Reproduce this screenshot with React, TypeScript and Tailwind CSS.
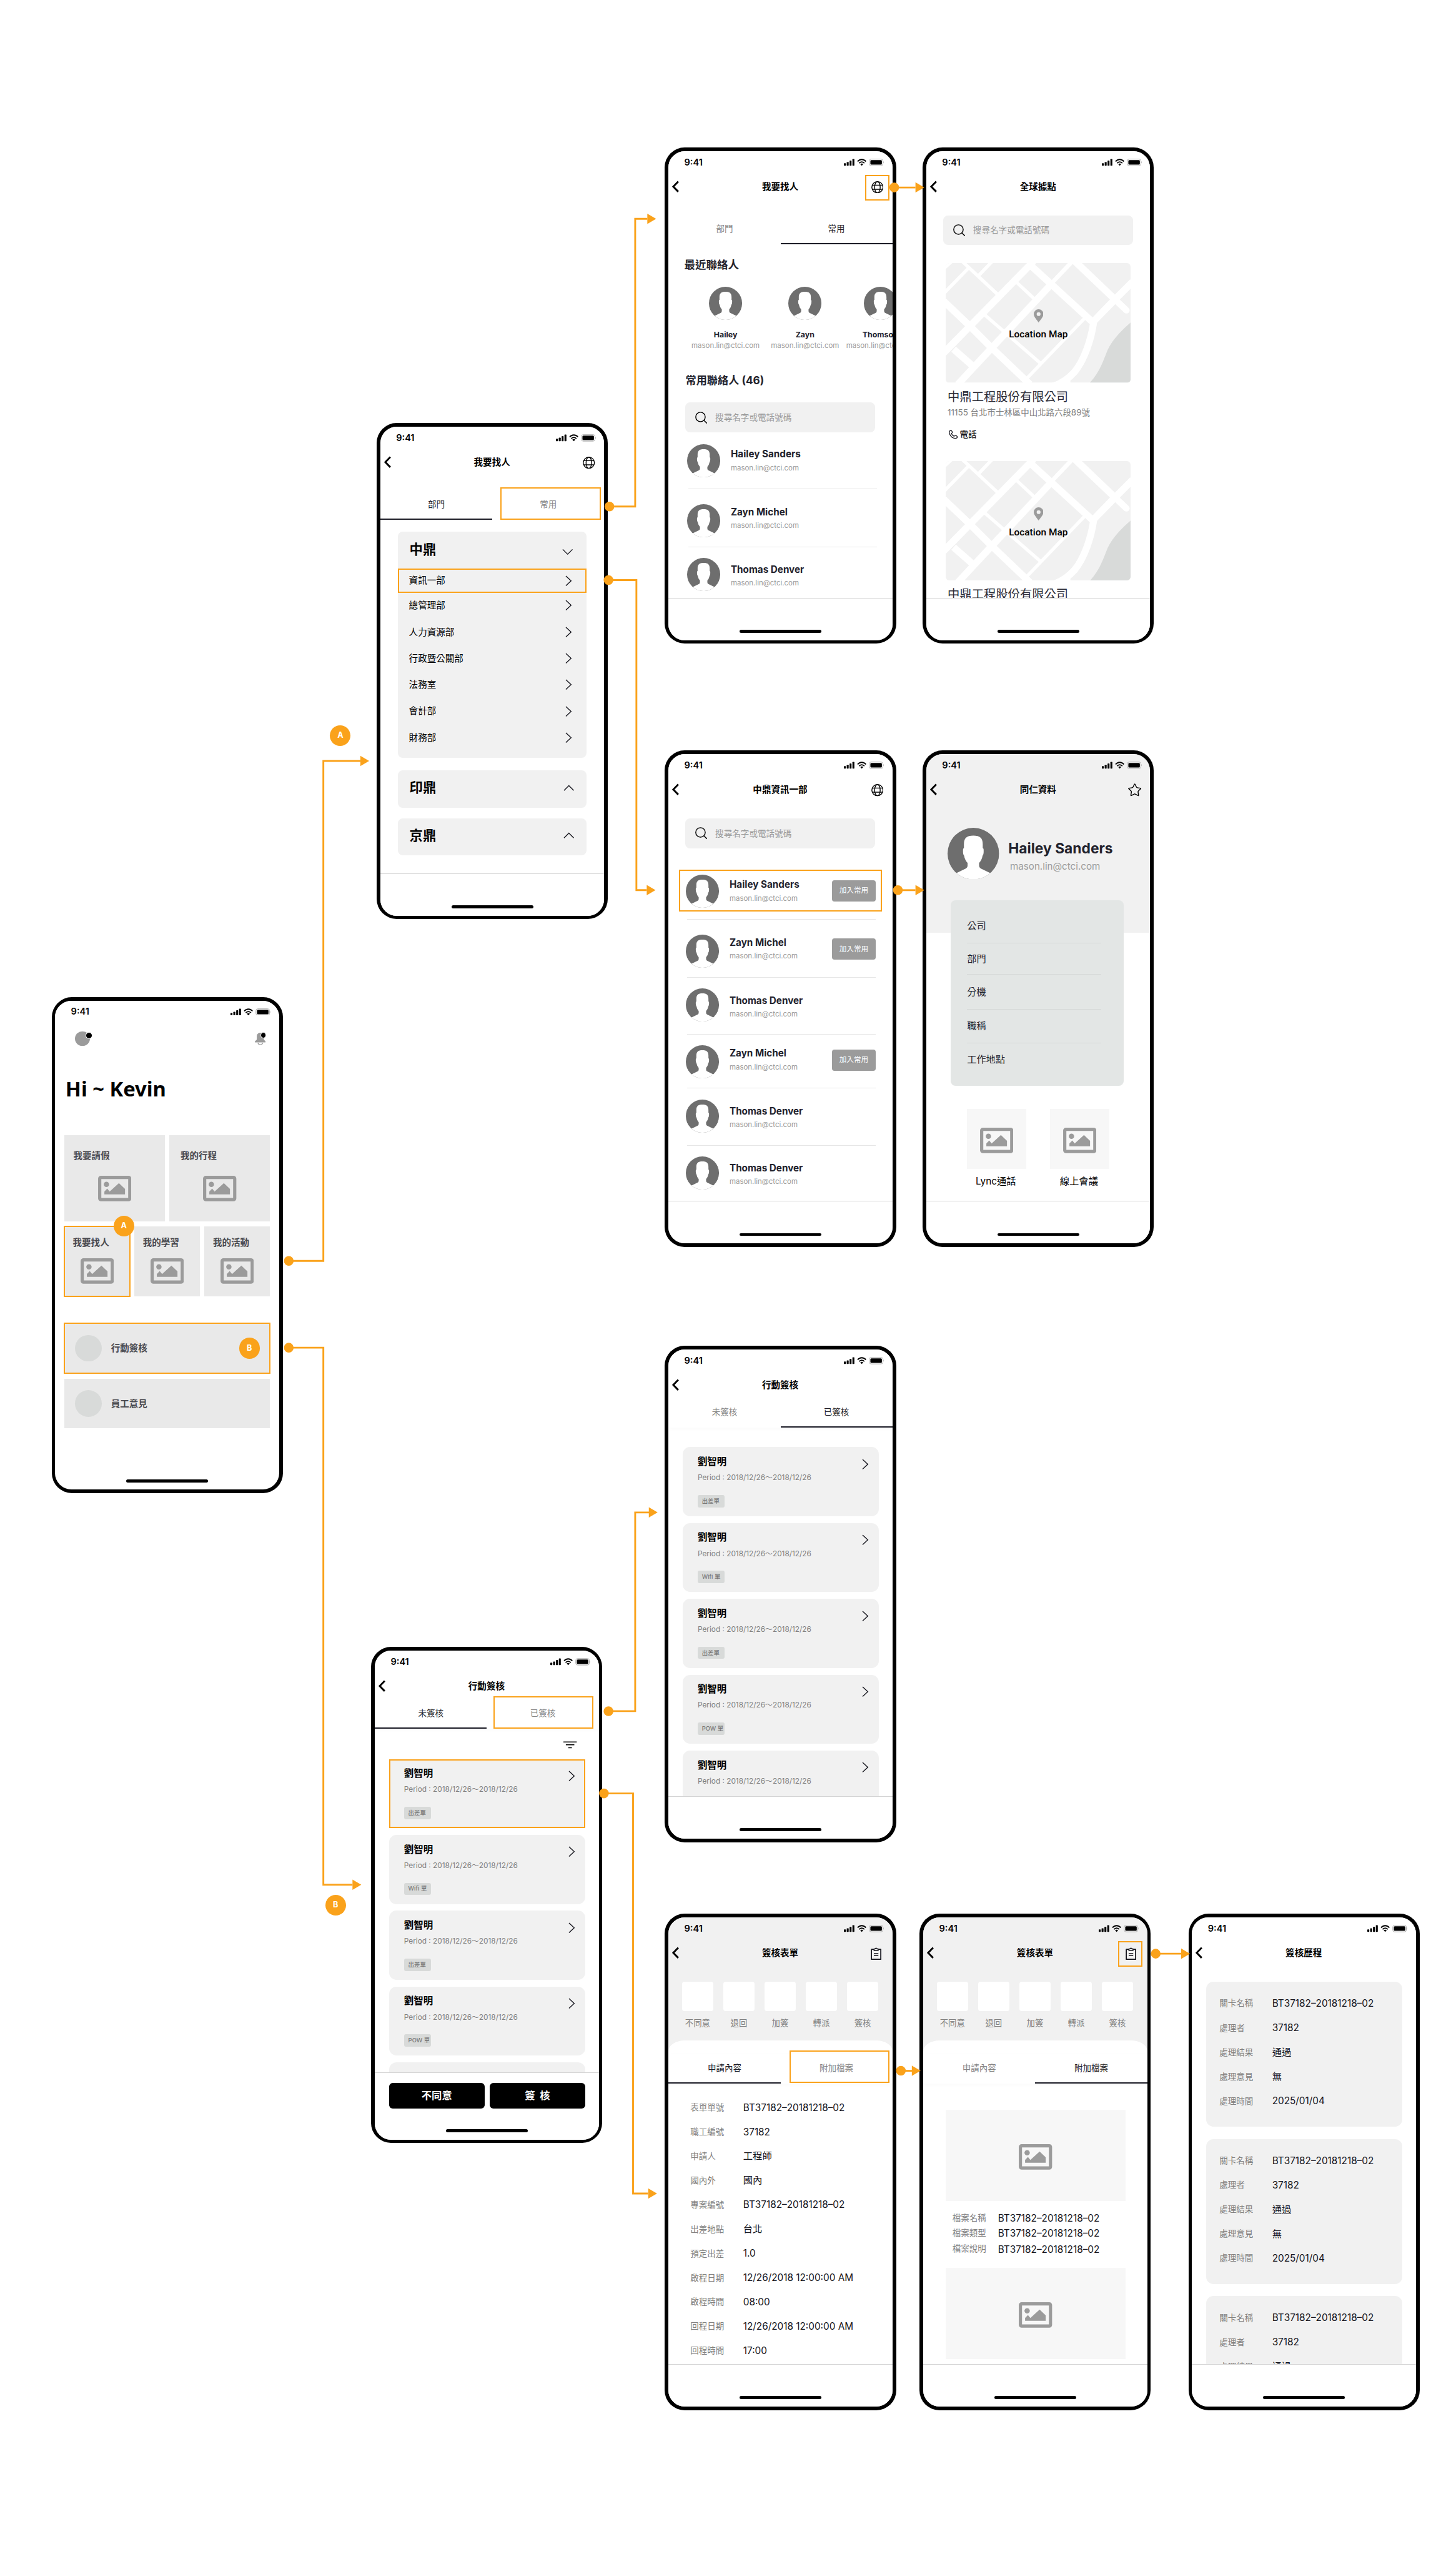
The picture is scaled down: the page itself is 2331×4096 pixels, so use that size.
import React from "react";
import type { ReactNode } from "react";
import { Star } from "lucide-react";

/* ---------- icons ---------- */

function StatusIcons() {
  return (
    <svg viewBox="0 0 66 12" className="h-3 w-[66px]">
      <rect x="0" y="7.6" width="3.2" height="3.9" rx="0.8" />
      <rect x="4.7" y="5.6" width="3.2" height="5.9" rx="0.8" />
      <rect x="9.4" y="3.2" width="3.2" height="8.3" rx="0.8" />
      <rect x="14.1" y="0.6" width="3.2" height="10.9" rx="0.8" />
      <path d="M29.5 11.6l-2.5-2.5a3.400 3.400 0 0 1 5 0z" />
      <path d="M25.200 7.400a5.300 5.300 0 0 1 8.600 0" fill="none" stroke="#000" strokeWidth="1.800" />
      <path d="M22.700 4.600a8.700 8.700 0 0 1 13.600 0" fill="none" stroke="#000" strokeWidth="1.900" />
      <rect x="42" y="0.700" width="22.400" height="10.800" rx="3" fill="none" stroke="#b0b0b0" strokeWidth="1" />
      <rect x="43.700" y="2.300" width="19" height="7.600" rx="1.600" />
      <path d="M65.200 4.200v3.600a2 2 0 0 0 0-3.600z" fill="#b0b0b0" />
    </svg>
  );
}

function BackIcon() {
  return (
    <svg viewBox="0 0 14 20" className="h-5 w-[14px]" fill="none" stroke="#000" strokeWidth="3">
      <path d="M11.2 1.6L3 10l8.2 8.4" />
    </svg>
  );
}

function GlobeIcon() {
  return (
    <svg viewBox="0 0 20 20" className="h-5 w-5" fill="none" stroke="#000" strokeWidth="1.4">
      <circle cx="10" cy="10" r="9.2" />
      <ellipse cx="10" cy="10" rx="4.6" ry="9.2" />
      <path d="M1.8 6.6h16.4M1.8 13.4h16.4" />
    </svg>
  );
}

function ClipboardIcon() {
  return (
    <svg viewBox="0 0 18 21" className="h-[21px] w-[18px]" fill="none" stroke="#14141c" strokeWidth="1.8">
      <path d="M5.2 3.2H1.2v16.6h15.4V3.2h-4" strokeLinejoin="round" />
      <path d="M5.4 5.2V2.6h1.7a1.9 1.9 0 0 1 3.6 0h1.7v2.6z" strokeWidth="1.5" strokeLinejoin="round" />
      <path d="M5.2 10.2h7.4M5.2 13.4h7.4" strokeWidth="1.5" />
    </svg>
  );
}

function ChevronRight() {
  return (
    <svg viewBox="0 0 11 18" className="h-[18px] w-[11px]" fill="none" stroke="#14141c" strokeWidth="1.4">
      <path d="M1 1l8.6 8L1 17" />
    </svg>
  );
}

function ChevronVertical({ up }: { up?: boolean }) {
  return (
    <svg viewBox="0 0 18 11" className="h-[11px] w-[18px]" fill="none" stroke="#14141c" strokeWidth="1.4">
      <path d={up ? "M1 9.6l8-8 8 8" : "M1 1.4l8 8 8-8"} />
    </svg>
  );
}

function SearchIcon() {
  return (
    <svg viewBox="0 0 20 20" className="h-5 w-5" fill="none" stroke="#000" strokeWidth="1.5">
      <circle cx="8.7" cy="8.7" r="7.8" />
      <path d="M14.2 14.2l5.2 5" />
    </svg>
  );
}

function PictureIcon() {
  return (
    <svg viewBox="0 0 55 42" className="h-[42px] w-[55px]" fill="#9b9b9b">
      <rect x="2.7" y="2.7" width="49.6" height="36.6" rx="2" fill="none" stroke="#9b9b9b" strokeWidth="5.3" />
      <circle cx="13.8" cy="14.2" r="4.4" />
      <path d="M10.4 30.6v-4.6l4.7-5 4 5 15.3-14 10 9.6v9z" />
    </svg>
  );
}

function Avatar({ className }: { className: string }) {
  return (
    <svg viewBox="0 0 85 85" className={className}>
      <clipPath id="avatar-disc">
        <circle cx="42.5" cy="42.5" r="42.5" />
      </clipPath>
      <g clipPath="url(#avatar-disc)">
        <rect width="85" height="85" fill="#6e6e6e" />
        <path
          fill="#fff"
          d="M14 74.8L30.5 67Q33 65.500 33 62.500V58Q28.300 52.500 27.300 46Q25.500 44.500 25.500 39.500V36Q25.500 33.800 27 33.500V27C27 17 31.500 13 42.500 13S58 17 58 27V33.500Q59.500 33.800 59.500 36V39.500Q59.500 44.500 57.700 46Q56.700 52.500 52 58V62.500Q52 65.500 54.500 67L71 74.800V86H14Z"
        />
      </g>
    </svg>
  );
}

function MapArt() {
  return (
    <svg viewBox="0 0 305 197" className="block h-[197px] w-[305px]">
      <rect width="305" height="197" fill="#f1f1f1" />
      <path d="M0 10V0h11z" fill="#fff" />
      <path d="M305 98C290 111 276 125 267 143 260 160 255 178 238 197H305z" fill="#d8dad9" />
      <g fill="none" stroke="#fff" strokeWidth="11.500">
        <path d="M145 -3L-4 149" />
        <path d="M174 35L74 142 20 200" />
        <path d="M-3 63L41 105 76 140 139 200" />
        <path d="M139 3L174 35 244 99" />
        <path d="M213 -3L279 60" />
        <path d="M279 60L298 78" strokeLinecap="round" strokeWidth="10.500" />
        <path d="M242 98L279 60 308 31" />
        <path d="M13 142L45 170" />
        <path d="M244 97C240 125 229 160 212 180 203 190 192 198 178 203" />
      </g>
      <path d="M166 199C182 197 195 191 204 182L206 199z" fill="#fff" />
      <g fill="none" stroke="#fff" strokeWidth="5.500">
        <path d="M173 35L209 -3" strokeWidth="7" />
        <path d="M-2 49L37 9" />
        <path d="M27 -3L87 53" />
        <path d="M54 21L76 -2" />
        <path d="M65 86L156 165" />
        <path d="M116 31L146 59" />
        <path d="M133 191L229 91" />
      </g>
    </svg>
  );
}

/* ---------- phone shell ---------- */

type PhoneProps = {
  place: string;
  title?: string;
  right?: ReactNode;
  top?: string;
  footer?: ReactNode;
  bare?: boolean;
  children: ReactNode;
};

function Phone({ place, title, right, top = "bg-white", footer, bare, children }: PhoneProps) {
  return (
    <section className={`absolute h-[818px] w-[381px] rounded-[33px] bg-black p-[6px] ${place}`}>
      <div className="relative flex h-full flex-col overflow-hidden rounded-[27px] bg-white">
        <div className={`flex h-[37px] shrink-0 items-center justify-between pr-[14px] pl-[26px] ${top}`}>
          <span className="pt-[1px] text-[15px] leading-5 font-semibold">9:41</span>
          <StatusIcons />
        </div>
        {!bare && (
          <header className={`flex h-[43px] shrink-0 items-center justify-between pr-[15px] pl-[5px] ${top}`}>
            <span className="w-6">
              <BackIcon />
            </span>
            <h2 className="pt-[2px] pl-[9px] text-[15px] leading-5 font-bold">{title}</h2>
            <span className="flex w-6 justify-end pt-[2px]">{right}</span>
          </header>
        )}
        <div className="min-h-0 flex-1 overflow-hidden">{children}</div>
        {!bare && (
          <footer className="relative shrink-0 border-t border-[#d4d4d4] bg-white">
            {footer ?? <div className="h-[69px]" />}
          </footer>
        )}
        <div className="absolute bottom-[12px] left-[117px] h-[5px] w-[135px] rounded-full bg-black" />
      </div>
    </section>
  );
}

function Highlight({ className }: { className: string }) {
  return <div className={`absolute border-[2.100px] border-[#faa21b] ${className}`} />;
}

function Badge({ label, className }: { label: string; className: string }) {
  return (
    <span
      className={`absolute flex h-[34px] w-[34px] items-center justify-center rounded-full bg-[#faa21b] text-[13px] leading-none font-bold text-white ${className}`}
    >
      {label}
    </span>
  );
}

function Tabs({ labels, active, soft, mark }: { labels: string[]; active: number; soft?: boolean; mark?: ReactNode }) {
  return (
    <div className={`relative flex h-[49px] ${soft ? "shadow-[0_2px_8px_rgba(0,0,0,0.025)]" : ""}`}>
      {labels.map((label, i) => (
        <div
          key={label}
          className={
            i === active
              ? "flex-1 border-b-[2.100px] border-[#1c1c26] pt-[14px] text-center text-[13.900px] leading-5 text-[#1c1c26]"
              : "flex-1 pt-[14px] text-center text-[13.900px] leading-5 text-[#858585]"
          }
        >
          {label}
        </div>
      ))}
      {mark}
    </div>
  );
}

function SearchBar({ className = "" }: { className?: string }) {
  return (
    <div className={`ml-7 flex h-[49px] w-[313px] items-center rounded-[8px] bg-[#f1f1f1] pl-4 ${className}`}>
      <SearchIcon />
      <span className="mt-[1px] ml-[13px] text-[14px] leading-5 text-[#9b9b9b]">搜尋名字或電話號碼</span>
    </div>
  );
}

/* ---------- home ---------- */

function Home() {
  return (
    <Phone bare place="left-[85px] top-[1643px]">
      <div className="mt-[14px] flex h-6 items-center justify-between pr-[22px] pl-[33px]">
        <div className="relative h-6 w-6 rounded-full bg-[#9b9b9b]">
          <span className="absolute top-[1px] left-[17px] h-[11px] w-[11px] rounded-full border-[1.5px] border-white bg-black" />
        </div>
        <div className="relative">
          <svg viewBox="0 0 18 20" className="h-5 w-[18px]" fill="#9b9b9b">
            <path d="M9 0C5.400 0 3.200 2.600 3.200 6v4.500c0 2-3.200 2.800-3.200 4.600 0 .7.500.9 1.200.9h15.600c.7 0 1.200-.2 1.200-.9 0-1.800-3.200-2.600-3.200-4.600V6c0-3.400-2.200-6-5.800-6z" />
            <path d="M5.300 16.500a3.700 3 0 0 0 7.400 0" fill="none" stroke="#9b9b9b" strokeWidth="1.500" />
          </svg>
          <span className="absolute -top-[1px] left-[9px] h-[10px] w-[10px] rounded-full border-[1.5px] border-white bg-black" />
        </div>
      </div>
      <h1 className="mt-[51px] ml-[17px] font-['Noto_Sans'] text-[33.700px] leading-[40px] font-bold">Hi ~ Kevin</h1>
      <div className="mx-[15px] mt-[56px] flex gap-2 text-[15px] leading-5 font-bold text-[#4a4a50]">
        <div className="h-[142px] w-[166px] bg-[#e9e9e9] pt-[25px]">
          <p className="pl-[15px]">我要請假</p>
          <div className="mt-[22px] flex justify-center">
            <PictureIcon />
          </div>
        </div>
        <div className="h-[142px] w-[166px] bg-[#e9e9e9] pt-[25px]">
          <p className="pl-[18px]">我的行程</p>
          <div className="mt-[22px] flex justify-center">
            <PictureIcon />
          </div>
        </div>
      </div>
      <div className="mx-[15px] mt-2 flex justify-between text-[15px] leading-5 font-bold text-[#4a4a50]">
        {["我要找人", "我的學習", "我的活動"].map((t, i) => (
          <div key={t} className="relative h-[116px] w-[108px] bg-[#e9e9e9] pt-[18px]">
            <p className="pl-[14px]">{t}</p>
            <div className="mt-[15px] flex justify-center">
              <PictureIcon />
            </div>
            {i === 0 && (
              <>
                <Highlight className="-inset-px" />
                <Badge label="A" className="-top-[17px] left-[81px]" />
              </>
            )}
          </div>
        ))}
      </div>
      <div className="mx-[15px] mt-[44px] flex flex-col gap-[9px] text-[15px] leading-5 font-bold text-[#4a4a50]">
        {["行動簽核", "員工意見"].map((t, i) => (
          <div key={t} className="relative flex h-[82px] items-center bg-[#e9e9e9] pl-[18px]">
            <span className="h-11 w-11 rounded-full bg-[#d8dad9]" />
            <span className="ml-[15px] pt-[2px]">{t}</span>
            {i === 0 && (
              <>
                <Highlight className="-inset-px" />
                <Badge label="B" className="top-[24px] right-[17px]" />
              </>
            )}
          </div>
        ))}
      </div>
    </Phone>
  );
}

/* ---------- find people ---------- */

const departments = ["總管理部", "人力資源部", "行政暨公關部", "法務室", "會計部", "財務部"];

function Departments() {
  return (
    <Phone place="left-[621px] top-[697px]" title="我要找人" right={<GlobeIcon />}>
      <div className="mt-[25px]">
        <Tabs
          labels={["部門", "常用"]}
          active={0}
          mark={<Highlight className="-top-[5px] left-[198px] h-[54px] w-[165px]" />}
        />
      </div>
      <div className="mt-[19px] ml-[29px] h-[373px] w-[311px] rounded-[8px] bg-[#f1f1f1]">
        <div className="flex h-[61px] items-center justify-between pr-[22px] pl-[19px]">
          <h3 className="pb-[2px] text-[22px] leading-7 font-semibold">中鼎</h3>
          <div className="pt-[6px]">
            <ChevronVertical />
          </div>
        </div>
        <div className="relative flex h-[40px] items-center justify-between pr-[24px] pl-[18px] text-[15px]">
          <span className="pt-[2px]">資訊一部</span>
          <ChevronRight />
          <Highlight className="inset-0" />
        </div>
        {departments.map((d, i) => (
          <div
            key={d}
            className={
              i === 0
                ? "flex h-[43px] items-center justify-between pr-[24px] pb-[2px] pl-[18px] text-[15px]"
                : "flex h-[43.500px] items-center justify-between pr-[24px] pl-[18px] text-[15px]"
            }
          >
            <span className="pt-[2px]">{d}</span>
            <ChevronRight />
          </div>
        ))}
      </div>
      {["印鼎", "京鼎"].map((t, i) => (
        <div
          key={t}
          className={`ml-[29px] flex h-[61px] w-[311px] items-center justify-between rounded-[8px] bg-[#f1f1f1] pr-[20px] pb-[4px] pl-[19px] ${i === 0 ? "mt-[21px]" : "mt-[18px]"}`}
        >
          <h3 className="text-[22px] leading-7 font-semibold">{t}</h3>
          <ChevronVertical up />
        </div>
      ))}
    </Phone>
  );
}

type Person = { name: string; row: string; avatar: string; text: string; button?: string };

function Contact({ p, mark }: { p: Person; mark?: ReactNode }) {
  return (
    <div className={`relative flex items-start border-[#e6e6e6] ${p.row}`}>
      <Avatar className={`-ml-[2px] h-[54.600px] w-[54.600px] shrink-0 ${p.avatar}`} />
      <div className={`ml-[17px] flex-1 ${p.text}`}>
        <p className="text-[15.700px] leading-5 font-bold text-[#22222c]">{p.name}</p>
        <p className="mt-[5px] text-[11.800px] leading-4 text-[#9b9b9b]">mason.lin@ctci.com</p>
      </div>
      {p.button && (
        <span
          className={`flex h-[35px] w-[73px] items-center justify-center rounded-[4px] bg-[#9b9b9b] text-[12px] text-white ${p.button}`}
        >
          加入常用
        </span>
      )}
      {mark}
    </div>
  );
}

const favourites: Person[] = [
  { name: "Hailey Sanders", row: "h-[94px] border-b", avatar: "mt-[20px]", text: "mt-[26px]" },
  { name: "Zayn Michel", row: "h-[95px] border-b", avatar: "mt-[24px]", text: "mt-[27px]" },
  { name: "Thomas Denver", row: "h-[95px]", avatar: "mt-[18px]", text: "mt-[27px]" },
];

const recent = [
  { name: "Hailey", gap: "mr-[19px]" },
  { name: "Zayn", gap: "mr-[12px]" },
  { name: "Thomson", gap: "" },
];

function Favourites() {
  return (
    <Phone place="left-[1096px] top-[243px]" title="我要找人" right={<GlobeIcon />}>
      <div className="mt-[25px]">
        <Tabs labels={["部門", "常用"]} active={1} />
      </div>
      <h3 className="mt-[21px] ml-[26px] text-[18px] leading-6 font-bold text-[#22222c]">最近聯絡人</h3>
      <div className="mt-[25px] flex pl-[38px]">
        {recent.map((r) => (
          <div key={r.name} className={`flex w-[112px] shrink-0 flex-col items-center ${r.gap}`}>
            <Avatar className="h-[54.600px] w-[54.600px]" />
            <p className="mt-[14px] text-[12.700px] leading-5 font-bold text-[#22222c]">{r.name}</p>
            <p className="text-[11.800px] leading-[18px] text-[#9b9b9b]">mason.lin@ctci.com</p>
          </div>
        ))}
      </div>
      <h3 className="mt-[35px] ml-[28px] text-[17.700px] leading-6 font-bold text-[#22222c]">常用聯絡人 (46)</h3>
      <SearchBar className="mt-[25px]" />
      <div className="ml-[33px] w-[311px]">
        {favourites.map((p) => (
          <Contact key={p.name} p={p} />
        ))}
      </div>
    </Phone>
  );
}

function Site() {
  return (
    <article className="mb-[34px] ml-8">
      <div className="relative w-[305px] overflow-hidden rounded-[6px]">
        <MapArt />
        <div className="absolute inset-x-0 top-[76px] flex flex-col items-center">
          <svg viewBox="0 0 16 22" className="h-[22px] w-4">
            <path
              fillRule="evenodd"
              fill="#9b9b9b"
              d="M8 0a8 8 0 0 0-8 8c0 4.500 4.500 8.500 8 13.800C11.500 16.500 16 12.500 16 8a8 8 0 0 0-8-8zm0 4.800a3.200 3.200 0 1 1 0 6.400 3.200 3.200 0 0 1 0-6.400z"
            />
          </svg>
          <span className="mt-[10px] font-['Roboto'] text-[15.900px] leading-5 font-medium">Location Map</span>
        </div>
      </div>
      <h3 className="mt-[9px] ml-[3px] text-[19.900px] leading-7 text-[#2b2b36]">中鼎工程股份有限公司</h3>
      <p className="mt-[2px] ml-[3px] text-[13.850px] leading-5 text-[#808080]">11155 台北市士林區中山北路六段89號</p>
      <div className="mt-4 ml-[5px] flex items-center gap-[3px]">
        <svg viewBox="0 0 24 24" className="h-[15px] w-[15px]" fill="none" stroke="#14141c" strokeWidth="2">
          <path d="M5.500 1.500c-2 0-4 2-4 5 0 8.500 8 16 15.500 16 3 0 5.500-1.800 5.500-4 0-1.200-3.600-4-5-4-1.300 0-1.800 2.300-3.300 2.300-2 0-7-5-7-7 0-1.400 2.300-1.800 2.300-3.200C9.500 5.200 6.800 1.500 5.500 1.500z" />
        </svg>
        <span className="text-[14px] leading-5 font-medium text-[#14141c]">電話</span>
      </div>
    </article>
  );
}

function Sites() {
  return (
    <Phone place="left-[1521px] top-[243px]" title="全球據點">
      <SearchBar className="mt-[26px] mb-[30px]" />
      <Site />
      <Site />
    </Phone>
  );
}

const team: Person[] = [
  { name: "Hailey Sanders", row: "h-[94px] border-b", avatar: "mt-[20px]", text: "mt-[26px]", button: "mt-[29px]" },
  { name: "Zayn Michel", row: "h-[95px] border-b", avatar: "mt-[24px]", text: "mt-[27px]", button: "mt-[31px]" },
  { name: "Thomas Denver", row: "h-[94px] border-b", avatar: "mt-[18px]", text: "mt-[28px]" },
  { name: "Zayn Michel", row: "h-[89px] border-b", avatar: "mt-[18px]", text: "mt-[21px]", button: "mt-[25px]" },
  { name: "Thomas Denver", row: "h-[94px] border-b", avatar: "mt-[18px]", text: "mt-[27px]" },
  { name: "Thomas Denver", row: "h-[94px]", avatar: "mt-[18px]", text: "mt-[27px]" },
];

function Team() {
  return (
    <Phone place="left-[1096px] top-[1237px]" title="中鼎資訊一部" right={<GlobeIcon />}>
      <SearchBar className="mt-[26px]" />
      <div className="mt-6 ml-[31px] w-[311px]">
        {team.map((p, i) => (
          <Contact
            key={i}
            p={p}
            mark={i === 0 ? <Highlight className="top-[11px] -left-[14px] h-[69px] w-[335px]" /> : undefined}
          />
        ))}
      </div>
    </Phone>
  );
}

function Profile() {
  return (
    <Phone
      place="left-[1521px] top-[1237px]"
      title="同仁資料"
      top="bg-[#f1f1f1]"
      right={<Star className="-mr-[1px] h-6 w-6 shrink-0" strokeWidth={1.5} />}
    >
      <div className="flex h-[214px] bg-[#f1f1f1] pt-[41px] pl-[35px]">
        <Avatar className="h-[85px] w-[85px]" />
        <div className="ml-[15px] pt-[20px]">
          <p className="text-[23.500px] leading-[30px] font-bold text-[#22222c]">Hailey Sanders</p>
          <p className="mt-[4px] ml-[3px] text-[15.600px] leading-5 text-[#9b9b9b]">mason.lin@ctci.com</p>
        </div>
      </div>
      <div className="relative -mt-[53px] ml-10 h-[306px] w-[285px] rounded-[8px] bg-[#e3e6e5] pl-[27px] text-[15.700px] text-[#22222c]">
        <div className="flex h-[71px] w-[221px] items-center border-b border-[#d5d8d7] pt-[14px]">公司</div>
        <div className="flex h-[51px] w-[221px] items-center border-b border-[#d5d8d7] pt-[1px]">部門</div>
        <div className="flex h-[58px] w-[221px] items-center border-b border-[#d5d8d7] pt-[2px]">分機</div>
        <div className="flex h-[55px] w-[221px] items-center border-b border-[#d5d8d7]">職稱</div>
        <div className="flex h-[54px] w-[221px] items-center pt-[1px]">工作地點</div>
      </div>
      <div className="mt-[38px] ml-[67px] flex gap-[39px]">
        {["Lync通話", "線上會議"].map((t) => (
          <div key={t} className="flex w-[98px] flex-col items-center">
            <div className="flex h-[98px] w-[98px] items-center justify-center bg-[#f7f7f7] pt-[5px]">
              <PictureIcon />
            </div>
            <p className="mt-[11px] pr-[3px] text-[15.800px] leading-5">{t}</p>
          </div>
        ))}
      </div>
    </Phone>
  );
}

/* ---------- approvals ---------- */

const forms = ["出差單", "Wifi 單", "出差單", "POW 單", "出差單"];

function ApprovalCard({ tag, marked }: { tag: string; marked?: boolean }) {
  return (
    <div
      className={`relative h-[114px] w-[324px] shrink-0 bg-[#f1f1f1] pt-[14px] pl-[25px] ${marked ? "" : "rounded-[12px]"}`}
    >
      <h3 className="text-[15.900px] leading-5 font-bold">劉智明</h3>
      <p className="mt-[9px] text-[12.200px] leading-4 text-[#808080]">Period : 2018/12/26～2018/12/26</p>
      <span className="mt-5 flex h-5 w-11 items-center rounded-[3px] bg-[#d8dad9] pl-[7px] text-[9.700px] font-medium whitespace-nowrap text-[#777]">
        {tag}
      </span>
      <div className="absolute top-[19px] right-[17px]">
        <ChevronRight />
      </div>
      {marked && <Highlight className="inset-0" />}
    </div>
  );
}

function Pending() {
  return (
    <Phone
      place="left-[612px] top-[2714px]"
      title="行動簽核"
      footer={
        <div className="flex h-[110px] gap-2 pt-[17px] pl-[23px]">
          {["不同意", "簽 核"].map((t) => (
            <button
              key={t}
              className="h-[42px] w-[158px] rounded-[6px] bg-black text-[16.800px] leading-5 font-bold text-white [word-spacing:4px]"
            >
              {t}
            </button>
          ))}
        </div>
      }
    >
      <Tabs soft labels={["未簽核", "已簽核"]} active={0} />
      <div className="flex h-[50px] items-center justify-end pt-[3px] pr-[36px]">
        <svg viewBox="0 0 22 12" className="h-3 w-[22px]" stroke="#000" strokeWidth="1.500">
          <path d="M0 1.200h22M4 6h14M8 10.800h6" />
        </svg>
      </div>
      <div className="ml-[23px] flex flex-col gap-[11px]">
        {forms.slice(0, 4).map((f, i) => (
          <ApprovalCard key={i} tag={f} marked={i === 0} />
        ))}
        <div className="h-[114px] w-[324px] shrink-0 rounded-[12px] bg-[#f1f1f1]" />
      </div>
    </Phone>
  );
}

function Approved() {
  return (
    <Phone place="left-[1096px] top-[2218px]" title="行動簽核">
      <Tabs soft labels={["未簽核", "已簽核"]} active={1} />
      <div className="mt-8 ml-[23px] flex flex-col gap-[11px]">
        {forms.map((f, i) => (
          <ApprovalCard key={i} tag={f} />
        ))}
      </div>
    </Phone>
  );
}

const actions = ["不同意", "退回", "加簽", "轉派", "簽核"];

function FormShell({ place, active, mark, children }: { place: string; active: number; mark?: ReactNode; children: ReactNode }) {
  return (
    <Phone
      place={place}
      title="簽核表單"
      top="bg-[#f1f1f1]"
      right={
        <span className="mr-[3px]">
          <ClipboardIcon />
        </span>
      }
    >
      <div className="bg-[#f1f1f1]">
        <div className="flex h-[123px] gap-4 pt-[26px] pl-[22px]">
          {actions.map((a) => (
            <div key={a} className="flex w-[52px] flex-col items-center">
              <span className="h-12 w-[52px] rounded-[4px] bg-white" />
              <span className="mt-[11px] text-[13.800px] leading-5 whitespace-nowrap text-[#808080]">{a}</span>
            </div>
          ))}
        </div>
        <div className="[border-radius:28px_28px_0_0/18px_18px_0_0] bg-white pt-[22px]">
          <Tabs soft labels={["申請內容", "附加檔案"]} active={active} mark={mark} />
        </div>
      </div>
      {children}
    </Phone>
  );
}

const fields: [string, string][] = [
  ["表單單號", "BT37182–20181218–02"],
  ["職工編號", "37182"],
  ["申請人", "工程師"],
  ["國內外", "國內"],
  ["專案編號", "BT37182–20181218–02"],
  ["出差地點", "台北"],
  ["預定出差", "1.0"],
  ["啟程日期", "12/26/2018 12:00:00 AM"],
  ["啟程時間", "08:00"],
  ["回程日期", "12/26/2018 12:00:00 AM"],
  ["回程時間", "17:00"],
];

function FieldRow({ label, value, className }: { label: string; value: string; className: string }) {
  return (
    <div className={`flex items-center ${className}`}>
      <span className="w-[87px] shrink-0 text-[13.900px] text-[#808080]">{label}</span>
      <span className="text-[15.800px] whitespace-nowrap text-[#14141c]">{value}</span>
    </div>
  );
}

function FormDetails() {
  return (
    <FormShell
      place="left-[1096px] top-[3154px]"
      active={0}
      mark={<Highlight className="-top-[6px] left-[199px] h-[54px] w-[165px]" />}
    >
      <div className="mt-[19px] ml-[36px]">
        {fields.map(([l, v]) => (
          <FieldRow key={l} label={l} value={v} className="h-[40.100px]" />
        ))}
      </div>
    </FormShell>
  );
}

function FormFiles() {
  return (
    <FormShell place="left-[1516px] top-[3154px]" active={1}>
      <div className="mt-[43px] ml-[37px] flex h-[150px] w-[296px] items-center justify-center bg-[#f7f7f7] pt-[5px]">
        <PictureIcon />
      </div>
      <div className="mt-4 ml-12">
        {["檔案名稱", "檔案類型", "檔案說明"].map((l, i) => (
          <div key={l} className="flex h-[25px] items-center">
            <span className="w-[75px] shrink-0 text-[13.900px] text-[#808080]">{l}</span>
            <span className={`text-[15.800px] whitespace-nowrap text-[#14141c] ${i === 2 ? "pt-1" : ""}`}>
              BT37182–20181218–02
            </span>
          </div>
        ))}
      </div>
      <div className="mt-[20px] ml-[37px] flex h-[150px] w-[296px] items-center justify-center bg-[#f7f7f7] pt-[5px]">
        <PictureIcon />
      </div>
    </FormShell>
  );
}

const steps: [string, string][] = [
  ["關卡名稱", "BT37182–20181218–02"],
  ["處理者", "37182"],
  ["處理結果", "通過"],
  ["處理意見", "無"],
  ["處理時間", "2025/01/04"],
];

function History() {
  return (
    <Phone place="left-[1959px] top-[3154px]" title="簽核歷程">
      <div className="mt-[26px] ml-[23px] flex flex-col gap-5">
        {[0, 1, 2].map((n) => (
          <div key={n} className="h-[239px] w-[324px] shrink-0 rounded-[12px] bg-[#f1f1f1] pt-[15.500px] pl-[22px]">
            {steps.map(([l, v]) => (
              <FieldRow key={l} label={l} value={v} className="h-[40.200px]" />
            ))}
          </div>
        ))}
      </div>
    </Phone>
  );
}

/* ---------- connectors ---------- */

const links = [
  { dot: [476, 2078], line: "M476 2078H533V1254H594", tip: [608.5, 1254] },
  { dot: [476, 2221], line: "M476 2221H533V3106H581", tip: [595.5, 3106] },
  { dot: [1004.5, 834.7], line: "M1004 834.7H1047V360.600H1067", tip: [1081.5, 360.6] },
  { dot: [1003, 956], line: "M1003 956H1049V1467H1066", tip: [1080.5, 1467] },
  { dot: [1474, 309], line: "M1474 309H1509", tip: [1523.5, 309] },
  { dot: [1480, 1467], line: "M1480 1467H1509", tip: [1523.5, 1467] },
  { dot: [1003, 2820], line: "M1003 2820H1047V2492.500H1070", tip: [1084, 2492.5] },
  { dot: [995.5, 2955.6], line: "M995 2955.600H1043.500V3615H1068", tip: [1083, 3615] },
  { dot: [1485, 3412.7], line: "M1485 3412.700H1504", tip: [1517.5, 3412.7] },
  { dot: [1905, 3219.7], line: "M1905 3219.700H1947", tip: [1961.5, 3219.7] },
];

function Connectors() {
  return (
    <svg viewBox="0 0 2400 4217" className="absolute inset-0 h-[4217px] w-[2400px]" fill="#faa21b">
      {links.map((l, i) => (
        <g key={i}>
          <path d={l.line} fill="none" stroke="#faa21b" strokeWidth="3" />
          <circle cx={l.dot[0]} cy={l.dot[1]} r="8" />
          <path d={`M${l.tip[0]} ${l.tip[1]}l-14.500 -8.500v17z`} />
        </g>
      ))}
    </svg>
  );
}

export default function App() {
  return (
    <main className="relative h-[4217px] w-[2400px] overflow-hidden bg-white font-['Inter','Noto_Sans_CJK_TC',sans-serif] text-black [zoom:0.97125]">
      <Home />
      <Departments />
      <Favourites />
      <Sites />
      <Team />
      <Profile />
      <Pending />
      <Approved />
      <FormDetails />
      <FormFiles />
      <History />
      <Highlight className="top-[288px] left-[1426px] h-[42px] w-[40px]" />
      <Highlight className="top-[3199px] left-[1843px] h-[42px] w-[40px]" />
      <Highlight className="top-[2795px] left-[813px] h-[54px] w-[165px]" />
      <Badge label="A" className="top-[1195px] left-[544px]" />
      <Badge label="B" className="top-[3123px] left-[536px]" />
      <Connectors />
    </main>
  );
}
